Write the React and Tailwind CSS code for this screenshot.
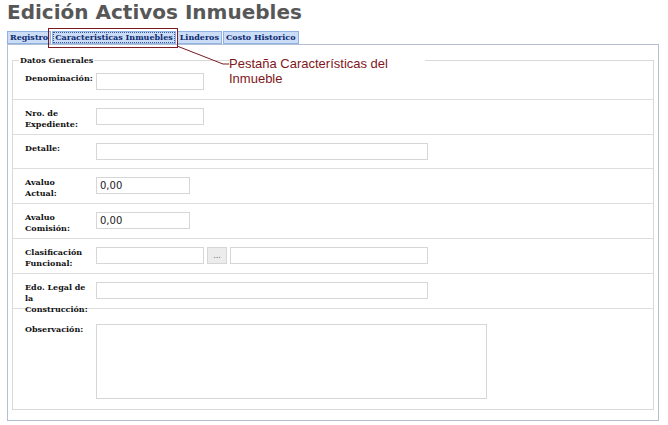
import React from "react";

const labelCls =
  "w-[64px] mr-[7px] shrink-0 font-['DejaVu_Serif',serif] font-bold text-[8px] leading-[11px] text-[#111]";
const inputCls =
  "h-[17px] border border-[#d6d6d6] bg-white px-[3px] font-['DejaVu_Sans',sans-serif] text-[10px] leading-[15px] text-[#222]";

function Row({ label, cls = "h-[35px] pt-[8px]", last, children }) {
  return (
    <div className={`flex pl-[12px] ${cls} ${last ? "" : "border-b border-[#dedede]"}`}>
      <div className={labelCls}>{label}</div>
      <div className="flex items-start gap-[3px]">{children}</div>
    </div>
  );
}

function Field({ w, value = "" }) {
  return (
    <div className={inputCls} style={{ width: w }}>
      {value}
    </div>
  );
}

const tabs = ["Registro", "Caracteristicas Inmuebles", "Linderos", "Costo Historico"];

export default function App() {
  return (
    <div className="relative w-[668px] h-[425px] bg-white overflow-hidden">
      <h1 className="pl-[7px] font-['DejaVu_Sans',sans-serif] font-bold text-[20px] leading-[24px] text-[#575757]">
        Edición Activos Inmuebles
      </h1>

      {/* Tabs */}
      <div className="flex gap-[1px] pl-[7px] mt-[7px]">
        {tabs.map((t, i) => (
          <div
            key={t}
            className={`h-[13px] px-[2px] border border-[#8fb1e4] bg-[#cadcf6] font-['DejaVu_Serif',serif] font-bold text-[8px] leading-[11px] text-[#0c2a70] ${
              i === 1 ? "outline outline-1 outline-dotted outline-[#3a5a9a] -outline-offset-2" : ""
            }`}
          >
            {t}
          </div>
        ))}
      </div>

      {/* Panel */}
      <div className="mx-[7px] w-[652px] border border-[#b3c0d3] px-[4px] pt-[10px] pb-[10px]">
        <fieldset className="border border-[#d9d9d9]">
          <legend className="ml-[6px] px-[1px] font-['DejaVu_Serif',serif] font-bold text-[8px] leading-[11px] text-[#111]">
            Datos Generales
          </legend>

          <Row label="Denominación:" cls="h-[34px] pt-[7px]">
            <Field w={108} />
          </Row>
          <Row label="Nro. de Expediente:">
            <Field w={108} />
          </Row>
          <Row label="Detalle:" cls="h-[34px] pt-[8px]">
            <Field w={332} />
          </Row>
          <Row label="Avaluo Actual:">
            <Field w={94} value="0,00" />
          </Row>
          <Row label="Avaluo Comisión:">
            <Field w={94} value="0,00" />
          </Row>
          <Row label="Clasificación Funcional:">
            <Field w={108} />
            <div className="w-[20px] h-[17px] border border-[#d6d6d6] bg-[#ececec] flex items-center justify-center font-['DejaVu_Sans',sans-serif] text-[8px] text-[#666]">
              ...
            </div>
            <Field w={198} />
          </Row>
          <Row label="Edo. Legal de la Construcción:">
            <Field w={332} />
          </Row>
          <Row label="Observación:" cls="h-[100px] pt-[15px]" last>
            <div className="w-[391px] h-[75px] border border-[#d6d6d6] bg-white" />
          </Row>
        </fieldset>
      </div>

      {/* Annotation */}
      <div className="absolute left-[48px] top-[28px] w-[130px] h-[20px] border border-[#7a1a22]" />
      <svg className="absolute left-0 top-0" width="668" height="425">
        <polyline points="177,46 223,64 229,64" fill="none" stroke="#7a1a22" strokeWidth="1" />
      </svg>
      <div className="absolute left-[229px] top-[56px] w-[196px] h-[34px] bg-white font-['Liberation_Sans',Arial,sans-serif] text-[13px] leading-[15px] text-[#80171b]">
        Pestaña Características del
        <br />
        Inmueble
      </div>
    </div>
  );
}
